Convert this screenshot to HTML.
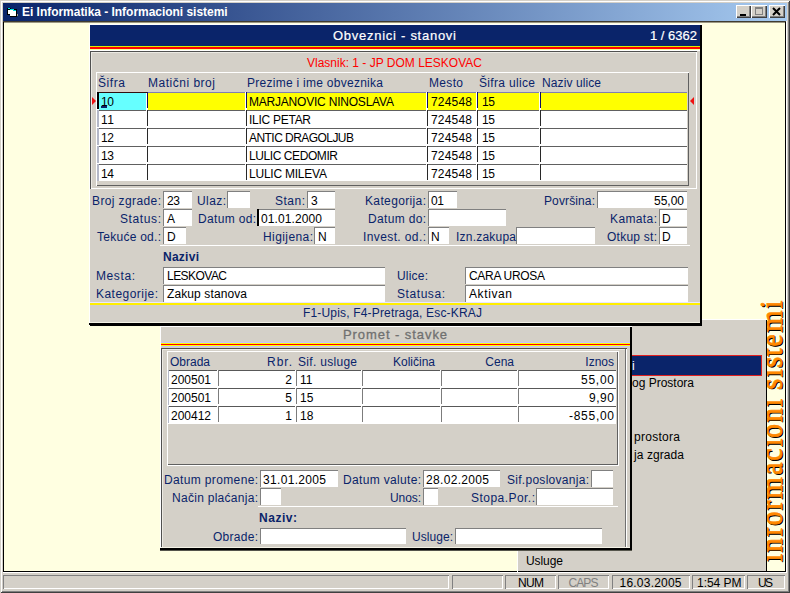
<!DOCTYPE html>
<html><head><meta charset="utf-8"><title>Ei Informatika</title>
<style>
html,body{margin:0;padding:0;}
body{width:790px;height:593px;overflow:hidden;position:relative;background:#d4d0c8;font-family:"Liberation Sans",sans-serif;}
#r{position:absolute;left:0;top:0;width:790px;height:593px;overflow:hidden;}
#r div,#r span,#r svg{position:absolute;}
#r span{white-space:pre;}
</style></head><body><div id="r">
<div style="left:0px;top:0px;width:790px;height:593px;background:#d4d0c8;box-shadow:inset 1px 1px 0 #d4d0c8, inset -1px -1px 0 #404040, inset 2px 2px 0 #fff, inset -2px -2px 0 #808080;"></div>
<div style="left:3px;top:3px;width:784px;height:18px;background:linear-gradient(90deg,#0a246a 0%,#a6caf0 100%);"></div>
<div style="left:3px;top:21px;width:784px;height:552px;background:#fff;"></div>
<div style="left:3px;top:21px;width:783px;height:551px;background:#ffffe1;box-shadow:inset 1px 1px 0 #000, inset -1px -1px 0 #000;"></div>
<div style="left:3px;top:21px;width:783px;height:1px;background:#403c30;"></div>
<div style="left:4px;top:22px;width:781px;height:1px;background:#9c9884;"></div>
<span style="top:5px;font-size:12px;line-height:14px;color:#fff;font-weight:bold;letter-spacing:-0.03px;left:22px;">Ei Informatika - Informacioni sistemi</span>
<div style="left:736px;top:5px;width:15px;height:13px;background:#d4d0c8;box-shadow:inset 1px 1px 0 #fff, inset -1px -1px 0 #404040, inset -2px -2px 0 #808080;"></div>
<div style="left:751px;top:5px;width:16px;height:13px;background:#d4d0c8;box-shadow:inset 1px 1px 0 #fff, inset -1px -1px 0 #404040, inset -2px -2px 0 #808080;"></div>
<div style="left:769px;top:5px;width:16px;height:13px;background:#d4d0c8;box-shadow:inset 1px 1px 0 #fff, inset -1px -1px 0 #404040, inset -2px -2px 0 #808080;"></div>
<div style="left:740px;top:14px;width:6px;height:2px;background:#000;"></div>
<div style="left:755px;top:7px;width:8px;height:8px;box-shadow:inset 0 2px 0 #808080, inset 1px 0 0 #808080, inset -1px -1px 0 #808080;background:#d4d0c8;"></div>
<svg style="left:772px;top:7px;width:10px;height:9px" viewBox="0 0 10 9"><path d="M1 1 L8 8 M8 1 L1 8" stroke="#000" stroke-width="2" fill="none"/></svg>
<svg style="left:0px;top:0px;width:24px;height:22px" viewBox="0 0 24 22" shape-rendering="crispEdges"><rect x="7" y="9" width="10" height="8" fill="#000"/><rect x="7" y="8" width="4" height="2" fill="#000"/><rect x="8" y="8" width="2" height="1" fill="#00e8e8"/><rect x="10" y="9" width="4" height="1" fill="#00e8e8"/><rect x="13" y="10" width="3" height="1" fill="#00d8d8"/><rect x="8" y="10" width="5" height="4" fill="#fff"/><rect x="10" y="11" width="6" height="5" fill="#fff"/><rect x="7" y="15" width="3" height="2" fill="#0a246a"/><rect x="17" y="14" width="1" height="2" fill="#a0a090"/></svg>
<div style="left:750px;top:290px;width:36px;height:281px;overflow:hidden;"><span style="left:0;top:0;transform-origin:0 0;transform:translate(5px,272px) rotate(-90deg) scaleX(0.993);font-family:'Liberation Serif',serif;font-size:32px;line-height:32px;color:#ff8800;-webkit-text-stroke:0.7px #ff8800;text-shadow:-1px 1px 0 #000,-1.4px 1.4px 0 #000;white-space:pre;"><i style="display:inline-block;position:static;font-style:normal;transform:scaleX(.87)">i</i><i style="display:inline-block;position:static;font-style:normal;transform:scaleX(.87)">n</i><i style="display:inline-block;position:static;font-style:normal;transform:scaleX(.87)">f</i><i style="display:inline-block;position:static;font-style:normal;transform:scaleX(.87)">o</i><i style="display:inline-block;position:static;font-style:normal;transform:scaleX(.87)">r</i><i style="display:inline-block;position:static;font-style:normal;transform:scaleX(.87)">m</i><i style="display:inline-block;position:static;font-style:normal;transform:scaleX(.87)">a</i><i style="display:inline-block;position:static;font-style:normal;transform:scaleX(.87)">c</i><i style="display:inline-block;position:static;font-style:normal;transform:scaleX(.87)">i</i><i style="display:inline-block;position:static;font-style:normal;transform:scaleX(.87)">o</i><i style="display:inline-block;position:static;font-style:normal;transform:scaleX(.87)">n</i><i style="display:inline-block;position:static;font-style:normal;transform:scaleX(.87)">i</i> <i style="display:inline-block;position:static;font-style:normal;transform:scaleX(.87)">s</i><i style="display:inline-block;position:static;font-style:normal;transform:scaleX(.87)">i</i><i style="display:inline-block;position:static;font-style:normal;transform:scaleX(.87)">s</i><i style="display:inline-block;position:static;font-style:normal;transform:scaleX(.87)">t</i><i style="display:inline-block;position:static;font-style:normal;transform:scaleX(.87)">e</i><i style="display:inline-block;position:static;font-style:normal;transform:scaleX(.87)">m</i><i style="display:inline-block;position:static;font-style:normal;transform:scaleX(.87)">i</i></span></div>

<div style="left:517px;top:319px;width:250px;height:253px;background:#d4d0c8;box-shadow:inset 1px 1px 0 #fff, inset -1px -1px 0 #000;"></div>
<div style="left:625px;top:355px;width:137px;height:21px;background:#0a246a;box-shadow:inset 0 0 0 1px #e02020;"></div>
<span style="top:359px;font-size:12px;line-height:14px;color:#fff;left:632px;">i</span>
<span style="top:376px;font-size:12px;line-height:14px;color:#000;left:632px;">og Prostora</span>
<span style="top:430px;font-size:12px;line-height:14px;color:#000;letter-spacing:0.28px;left:634px;">prostora</span>
<span style="top:448px;font-size:12px;line-height:14px;color:#000;letter-spacing:0.08px;left:634px;">ja zgrada</span>
<span style="top:554px;font-size:12px;line-height:14px;color:#000;letter-spacing:-0.07px;left:526px;">Usluge</span>
<div style="left:160px;top:325px;width:472px;height:226px;background:#d4d0c8;box-shadow:inset 1px 2px 0 #fff, inset -2px -2px 0 #000;"></div>
<div style="left:161px;top:547px;width:469px;height:1px;background:#f4f2e6;"></div>
<div style="left:160px;top:548px;width:471px;height:2px;background:#000;"></div>
<div style="left:160px;top:550px;width:472px;height:1px;background:#55554c;"></div>
<div style="left:161px;top:342px;width:469px;height:1px;background:#c4c4ff;"></div>
<div style="left:161px;top:343px;width:469px;height:1px;background:#ffff00;"></div>
<div style="left:161px;top:344px;width:469px;height:1px;background:#ff0000;"></div>
<div style="left:161px;top:345px;width:469px;height:1px;background:#ffff00;"></div>
<div style="left:161px;top:346px;width:469px;height:1px;background:#c4c4ff;"></div>
<div style="left:161px;top:348px;width:466px;height:199px;background:#d4d0c8;box-shadow:inset 1px 1px 0 #505050, inset -1px 0 0 #fff, inset -2px 0 0 #707070, inset 2px 2px 0 #eceae4;"></div>
<div style="left:167px;top:351px;width:451px;height:114px;background:#d4d0c8;box-shadow:inset 1px 1px 0 #fff, inset -1px -1px 0 #606060;"></div>
<div style="left:618px;top:351px;width:1px;height:115px;background:#fff;"></div>
<div style="left:167px;top:465px;width:452px;height:1px;background:#fff;"></div>
<div style="left:168px;top:370px;width:448px;height:54px;background:#fff;"></div>
<div style="left:168px;top:370px;width:448px;height:1px;background:#585858;"></div>
<div style="left:217px;top:370px;width:1px;height:1px;background:#fff;"></div>
<div style="left:218px;top:370px;width:1px;height:16px;background:#7c7c7c;"></div>
<div style="left:295px;top:370px;width:1px;height:1px;background:#fff;"></div>
<div style="left:296px;top:370px;width:1px;height:16px;background:#7c7c7c;"></div>
<div style="left:361px;top:370px;width:1px;height:1px;background:#fff;"></div>
<div style="left:362px;top:370px;width:1px;height:16px;background:#7c7c7c;"></div>
<div style="left:440px;top:370px;width:1px;height:1px;background:#fff;"></div>
<div style="left:441px;top:370px;width:1px;height:16px;background:#7c7c7c;"></div>
<div style="left:517px;top:370px;width:1px;height:1px;background:#fff;"></div>
<div style="left:518px;top:370px;width:1px;height:16px;background:#7c7c7c;"></div>
<div style="left:168px;top:370px;width:1px;height:17px;background:#b4b8c8;"></div>
<div style="left:168px;top:388px;width:448px;height:1px;background:#585858;"></div>
<div style="left:217px;top:388px;width:1px;height:1px;background:#fff;"></div>
<div style="left:218px;top:388px;width:1px;height:16px;background:#7c7c7c;"></div>
<div style="left:295px;top:388px;width:1px;height:1px;background:#fff;"></div>
<div style="left:296px;top:388px;width:1px;height:16px;background:#7c7c7c;"></div>
<div style="left:361px;top:388px;width:1px;height:1px;background:#fff;"></div>
<div style="left:362px;top:388px;width:1px;height:16px;background:#7c7c7c;"></div>
<div style="left:440px;top:388px;width:1px;height:1px;background:#fff;"></div>
<div style="left:441px;top:388px;width:1px;height:16px;background:#7c7c7c;"></div>
<div style="left:517px;top:388px;width:1px;height:1px;background:#fff;"></div>
<div style="left:518px;top:388px;width:1px;height:16px;background:#7c7c7c;"></div>
<div style="left:168px;top:388px;width:1px;height:17px;background:#b4b8c8;"></div>
<div style="left:168px;top:406px;width:448px;height:1px;background:#585858;"></div>
<div style="left:217px;top:406px;width:1px;height:1px;background:#fff;"></div>
<div style="left:218px;top:406px;width:1px;height:16px;background:#7c7c7c;"></div>
<div style="left:295px;top:406px;width:1px;height:1px;background:#fff;"></div>
<div style="left:296px;top:406px;width:1px;height:16px;background:#7c7c7c;"></div>
<div style="left:361px;top:406px;width:1px;height:1px;background:#fff;"></div>
<div style="left:362px;top:406px;width:1px;height:16px;background:#7c7c7c;"></div>
<div style="left:440px;top:406px;width:1px;height:1px;background:#fff;"></div>
<div style="left:441px;top:406px;width:1px;height:16px;background:#7c7c7c;"></div>
<div style="left:517px;top:406px;width:1px;height:1px;background:#fff;"></div>
<div style="left:518px;top:406px;width:1px;height:16px;background:#7c7c7c;"></div>
<div style="left:168px;top:406px;width:1px;height:17px;background:#b4b8c8;"></div>
<div style="left:260px;top:470px;width:78px;height:17px;background:#fff;box-shadow:inset 1px 1px 0 #808080;"></div>
<div style="left:423px;top:470px;width:77px;height:17px;background:#fff;box-shadow:inset 1px 1px 0 #808080;"></div>
<div style="left:591px;top:470px;width:22px;height:17px;background:#fff;box-shadow:inset 1px 1px 0 #808080;"></div>
<div style="left:260px;top:488px;width:21px;height:17px;background:#fff;box-shadow:inset 1px 1px 0 #808080;"></div>
<div style="left:423px;top:488px;width:15px;height:17px;background:#fff;box-shadow:inset 1px 1px 0 #808080;"></div>
<div style="left:536px;top:488px;width:77px;height:17px;background:#fff;box-shadow:inset 1px 1px 0 #808080;"></div>
<div style="left:258px;top:506px;width:360px;height:1px;background:#fff;"></div>
<div style="left:260px;top:528px;width:146px;height:16px;background:#fff;box-shadow:inset 1px 1px 0 #808080;"></div>
<div style="left:455px;top:528px;width:147px;height:16px;background:#fff;box-shadow:inset 1px 1px 0 #808080;"></div>
<span style="top:327px;font-size:13px;line-height:15px;color:#707070;letter-spacing:0.93px;left:343px;-webkit-text-stroke:0.3px #707070;">Promet - stavke</span>
<span style="top:373px;font-size:12px;line-height:14px;color:#000;letter-spacing:-0.01px;left:171px;">200501</span>
<span style="top:373px;font-size:12px;line-height:14px;color:#000;right:498px;">2</span>
<span style="top:373px;font-size:12px;line-height:14px;color:#000;left:300px;">11</span>
<span style="top:373px;font-size:12px;line-height:14px;color:#000;letter-spacing:0.74px;left:581px;">55,00</span>
<span style="top:391px;font-size:12px;line-height:14px;color:#000;letter-spacing:-0.01px;left:171px;">200501</span>
<span style="top:391px;font-size:12px;line-height:14px;color:#000;right:498px;">5</span>
<span style="top:391px;font-size:12px;line-height:14px;color:#000;left:300px;">15</span>
<span style="top:391px;font-size:12px;line-height:14px;color:#000;letter-spacing:0.55px;left:589px;">9,90</span>
<span style="top:409px;font-size:12px;line-height:14px;color:#000;letter-spacing:-0.01px;left:171px;">200412</span>
<span style="top:409px;font-size:12px;line-height:14px;color:#000;right:498px;">1</span>
<span style="top:409px;font-size:12px;line-height:14px;color:#000;left:300px;">18</span>
<span style="top:409px;font-size:12px;line-height:14px;color:#000;letter-spacing:0.72px;left:569px;">-855,00</span>
<span style="top:355px;font-size:12px;line-height:14px;color:#0a246a;letter-spacing:-0.01px;left:170px;">Obrada</span>
<span style="top:355px;font-size:12px;line-height:14px;color:#0a246a;letter-spacing:0.99px;left:267px;">Rbr.</span>
<span style="top:355px;font-size:12px;line-height:14px;color:#0a246a;letter-spacing:0.3px;left:298px;">Sif. usluge</span>
<span style="top:355px;font-size:12px;line-height:14px;color:#0a246a;left:393px;">Količina</span>
<span style="top:355px;font-size:12px;line-height:14px;color:#0a246a;right:276px;">Cena</span>
<span style="top:355px;font-size:12px;line-height:14px;color:#0a246a;right:176px;">Iznos</span>
<span style="top:473px;font-size:12px;line-height:14px;color:#0a246a;letter-spacing:0.36px;left:164px;">Datum promene:</span>
<span style="top:473px;font-size:12px;line-height:14px;color:#000;letter-spacing:0.33px;left:263px;">31.01.2005</span>
<span style="top:473px;font-size:12px;line-height:14px;color:#0a246a;letter-spacing:0.33px;left:343px;">Datum valute:</span>
<span style="top:473px;font-size:12px;line-height:14px;color:#000;letter-spacing:0.33px;left:426px;">28.02.2005</span>
<span style="top:473px;font-size:12px;line-height:14px;color:#0a246a;letter-spacing:0.28px;left:507px;">Sif.poslovanja:</span>
<span style="top:491px;font-size:12px;line-height:14px;color:#0a246a;letter-spacing:0.28px;left:172px;">Način plaćanja:</span>
<span style="top:491px;font-size:12px;line-height:14px;color:#0a246a;letter-spacing:-0.09px;left:390px;">Unos:</span>
<span style="top:491px;font-size:12px;line-height:14px;color:#0a246a;letter-spacing:0.46px;left:471px;">Stopa.Por.:</span>
<span style="top:511px;font-size:12px;line-height:14px;color:#0a246a;font-weight:bold;letter-spacing:0.53px;left:259px;">Naziv:</span>
<span style="top:530px;font-size:12px;line-height:14px;color:#0a246a;letter-spacing:0.27px;left:213px;">Obrade:</span>
<span style="top:530px;font-size:12px;line-height:14px;color:#0a246a;letter-spacing:0.05px;left:412px;">Usluge:</span>
<div style="left:89px;top:24px;width:613px;height:302px;background:#d4d0c8;box-shadow:inset 1px 1px 0 #fff, inset -2px -2px 0 #000;"></div>
<div style="left:90px;top:322px;width:610px;height:1px;background:#f4f2e6;"></div>
<div style="left:89px;top:323px;width:612px;height:2px;background:#000;"></div>
<div style="left:90px;top:25px;width:610px;height:21px;background:#0a246a;"></div>
<div style="left:90px;top:46px;width:610px;height:1px;background:#d8ee00;"></div>
<div style="left:90px;top:47px;width:610px;height:2px;background:#ff0000;"></div>
<div style="left:90px;top:49px;width:610px;height:1px;background:#f4ff90;"></div>
<div style="left:90px;top:50px;width:610px;height:1px;background:#fff;"></div>
<div style="left:90px;top:51px;width:607px;height:138px;background:#d4d0c8;box-shadow:inset 1px 1px 0 #505050, inset -1px -1px 0 #fff, inset 2px 2px 0 #eceae4;"></div>
<div style="left:96px;top:72px;width:593px;height:114px;background:#d4d0c8;box-shadow:inset 1px 1px 0 #fff, inset -1px -1px 0 #606060;"></div>
<div style="left:97px;top:92px;width:590px;height:89px;background:#fff;"></div>
<div style="left:99px;top:93px;width:47px;height:17px;background:#66ffff;"></div>
<div style="left:148px;top:93px;width:97px;height:17px;background:#ffff00;"></div>
<div style="left:247px;top:93px;width:179px;height:17px;background:#ffff00;"></div>
<div style="left:428px;top:93px;width:48px;height:17px;background:#ffff00;"></div>
<div style="left:478px;top:93px;width:61px;height:17px;background:#ffff00;"></div>
<div style="left:541px;top:93px;width:146px;height:17px;background:#ffff00;"></div>
<div style="left:97px;top:92px;width:590px;height:1px;background:#8080b0;"></div>
<div style="left:146px;top:92px;width:1px;height:1px;background:#fff;"></div>
<div style="left:147px;top:92px;width:1px;height:16px;background:#101060;"></div>
<div style="left:245px;top:92px;width:1px;height:1px;background:#fff;"></div>
<div style="left:246px;top:92px;width:1px;height:16px;background:#101060;"></div>
<div style="left:426px;top:92px;width:1px;height:1px;background:#fff;"></div>
<div style="left:427px;top:92px;width:1px;height:16px;background:#101060;"></div>
<div style="left:476px;top:92px;width:1px;height:1px;background:#fff;"></div>
<div style="left:477px;top:92px;width:1px;height:16px;background:#101060;"></div>
<div style="left:539px;top:92px;width:1px;height:1px;background:#fff;"></div>
<div style="left:540px;top:92px;width:1px;height:16px;background:#101060;"></div>
<div style="left:97px;top:92px;width:2px;height:17px;background:#b4b8c8;"></div>
<div style="left:97px;top:110px;width:590px;height:1px;background:#606060;"></div>
<div style="left:146px;top:110px;width:1px;height:1px;background:#fff;"></div>
<div style="left:147px;top:110px;width:1px;height:16px;background:#282828;"></div>
<div style="left:245px;top:110px;width:1px;height:1px;background:#fff;"></div>
<div style="left:246px;top:110px;width:1px;height:16px;background:#282828;"></div>
<div style="left:426px;top:110px;width:1px;height:1px;background:#fff;"></div>
<div style="left:427px;top:110px;width:1px;height:16px;background:#282828;"></div>
<div style="left:476px;top:110px;width:1px;height:1px;background:#fff;"></div>
<div style="left:477px;top:110px;width:1px;height:16px;background:#282828;"></div>
<div style="left:539px;top:110px;width:1px;height:1px;background:#fff;"></div>
<div style="left:540px;top:110px;width:1px;height:16px;background:#282828;"></div>
<div style="left:97px;top:110px;width:2px;height:17px;background:#b4b8c8;"></div>
<div style="left:97px;top:128px;width:590px;height:1px;background:#606060;"></div>
<div style="left:146px;top:128px;width:1px;height:1px;background:#fff;"></div>
<div style="left:147px;top:128px;width:1px;height:16px;background:#282828;"></div>
<div style="left:245px;top:128px;width:1px;height:1px;background:#fff;"></div>
<div style="left:246px;top:128px;width:1px;height:16px;background:#282828;"></div>
<div style="left:426px;top:128px;width:1px;height:1px;background:#fff;"></div>
<div style="left:427px;top:128px;width:1px;height:16px;background:#282828;"></div>
<div style="left:476px;top:128px;width:1px;height:1px;background:#fff;"></div>
<div style="left:477px;top:128px;width:1px;height:16px;background:#282828;"></div>
<div style="left:539px;top:128px;width:1px;height:1px;background:#fff;"></div>
<div style="left:540px;top:128px;width:1px;height:16px;background:#282828;"></div>
<div style="left:97px;top:128px;width:2px;height:17px;background:#b4b8c8;"></div>
<div style="left:97px;top:146px;width:590px;height:1px;background:#606060;"></div>
<div style="left:146px;top:146px;width:1px;height:1px;background:#fff;"></div>
<div style="left:147px;top:146px;width:1px;height:16px;background:#282828;"></div>
<div style="left:245px;top:146px;width:1px;height:1px;background:#fff;"></div>
<div style="left:246px;top:146px;width:1px;height:16px;background:#282828;"></div>
<div style="left:426px;top:146px;width:1px;height:1px;background:#fff;"></div>
<div style="left:427px;top:146px;width:1px;height:16px;background:#282828;"></div>
<div style="left:476px;top:146px;width:1px;height:1px;background:#fff;"></div>
<div style="left:477px;top:146px;width:1px;height:16px;background:#282828;"></div>
<div style="left:539px;top:146px;width:1px;height:1px;background:#fff;"></div>
<div style="left:540px;top:146px;width:1px;height:16px;background:#282828;"></div>
<div style="left:97px;top:146px;width:2px;height:17px;background:#b4b8c8;"></div>
<div style="left:97px;top:164px;width:590px;height:1px;background:#606060;"></div>
<div style="left:146px;top:164px;width:1px;height:1px;background:#fff;"></div>
<div style="left:147px;top:164px;width:1px;height:16px;background:#282828;"></div>
<div style="left:245px;top:164px;width:1px;height:1px;background:#fff;"></div>
<div style="left:246px;top:164px;width:1px;height:16px;background:#282828;"></div>
<div style="left:426px;top:164px;width:1px;height:1px;background:#fff;"></div>
<div style="left:427px;top:164px;width:1px;height:16px;background:#282828;"></div>
<div style="left:476px;top:164px;width:1px;height:1px;background:#fff;"></div>
<div style="left:477px;top:164px;width:1px;height:16px;background:#282828;"></div>
<div style="left:539px;top:164px;width:1px;height:1px;background:#fff;"></div>
<div style="left:540px;top:164px;width:1px;height:16px;background:#282828;"></div>
<div style="left:97px;top:164px;width:2px;height:17px;background:#b4b8c8;"></div>
<div style="left:97px;top:92px;width:50px;height:1px;background:#301010;"></div>
<div style="left:97px;top:92px;width:2px;height:17px;background:#000;"></div>
<div style="left:101px;top:106px;width:6px;height:2px;background:#0a246a;"></div>
<span style="top:28px;font-size:13px;line-height:15px;color:#fff;letter-spacing:0.73px;left:333px;-webkit-text-stroke:0.2px #fff;">Obveznici - stanovi</span>
<span style="top:28px;font-size:13px;line-height:15px;color:#fff;left:650px;-webkit-text-stroke:0.2px #fff;">1 / 6362</span>
<span style="top:56px;font-size:12px;line-height:14px;color:#ff0000;left:307px;">Vlasnik: 1 - JP DOM LESKOVAC</span>
<span style="top:95px;font-size:12px;line-height:14px;color:#000;letter-spacing:-0.36px;left:101px;">10</span>
<span style="top:95px;font-size:12px;line-height:14px;color:#000;letter-spacing:-0.21px;left:249px;">MARJANOVIC NINOSLAVA</span>
<span style="top:95px;font-size:12px;line-height:14px;color:#000;letter-spacing:0.19px;left:431px;">724548</span>
<span style="top:95px;font-size:12px;line-height:14px;color:#000;letter-spacing:-0.36px;left:482px;">15</span>
<span style="top:113px;font-size:12px;line-height:14px;color:#000;letter-spacing:0.53px;left:101px;">11</span>
<span style="top:113px;font-size:12px;line-height:14px;color:#000;letter-spacing:-0.27px;left:249px;">ILIC PETAR</span>
<span style="top:113px;font-size:12px;line-height:14px;color:#000;letter-spacing:0.19px;left:431px;">724548</span>
<span style="top:113px;font-size:12px;line-height:14px;color:#000;letter-spacing:-0.36px;left:482px;">15</span>
<span style="top:131px;font-size:12px;line-height:14px;color:#000;letter-spacing:-0.36px;left:101px;">12</span>
<span style="top:131px;font-size:12px;line-height:14px;color:#000;letter-spacing:-0.55px;left:249px;">ANTIC DRAGOLJUB</span>
<span style="top:131px;font-size:12px;line-height:14px;color:#000;letter-spacing:0.19px;left:431px;">724548</span>
<span style="top:131px;font-size:12px;line-height:14px;color:#000;letter-spacing:-0.36px;left:482px;">15</span>
<span style="top:149px;font-size:12px;line-height:14px;color:#000;letter-spacing:-0.36px;left:101px;">13</span>
<span style="top:149px;font-size:12px;line-height:14px;color:#000;letter-spacing:-0.42px;left:249px;">LULIC CEDOMIR</span>
<span style="top:149px;font-size:12px;line-height:14px;color:#000;letter-spacing:0.19px;left:431px;">724548</span>
<span style="top:149px;font-size:12px;line-height:14px;color:#000;letter-spacing:-0.36px;left:482px;">15</span>
<span style="top:167px;font-size:12px;line-height:14px;color:#000;letter-spacing:-0.36px;left:101px;">14</span>
<span style="top:167px;font-size:12px;line-height:14px;color:#000;letter-spacing:-0.23px;left:249px;">LULIC MILEVA</span>
<span style="top:167px;font-size:12px;line-height:14px;color:#000;letter-spacing:0.19px;left:431px;">724548</span>
<span style="top:167px;font-size:12px;line-height:14px;color:#000;letter-spacing:-0.36px;left:482px;">15</span>
<span style="top:76px;font-size:12px;line-height:14px;color:#0a246a;letter-spacing:0.58px;left:98px;">Šifra</span>
<span style="top:76px;font-size:12px;line-height:14px;color:#0a246a;letter-spacing:0.51px;left:148px;">Matični broj</span>
<span style="top:76px;font-size:12px;line-height:14px;color:#0a246a;letter-spacing:0.27px;left:247px;">Prezime i ime obveznika</span>
<span style="top:76px;font-size:12px;line-height:14px;color:#0a246a;letter-spacing:0.33px;left:429px;">Mesto</span>
<span style="top:76px;font-size:12px;line-height:14px;color:#0a246a;letter-spacing:0.33px;left:479px;">Šifra ulice</span>
<span style="top:76px;font-size:12px;line-height:14px;color:#0a246a;letter-spacing:0.1px;left:542px;">Naziv ulice</span>
<svg style="left:92px;top:97px;width:4px;height:8px" viewBox="0 0 4 8"><path d="M0 0 L4 4 L0 8 Z" fill="#f01010"/></svg>
<svg style="left:690px;top:97px;width:4px;height:8px" viewBox="0 0 4 8"><path d="M4 0 L0 4 L4 8 Z" fill="#f01010"/></svg>
<div style="left:163px;top:191px;width:29px;height:17px;background:#fff;box-shadow:inset 1px 1px 0 #808080;"></div>
<div style="left:227px;top:191px;width:23px;height:17px;background:#fff;box-shadow:inset 1px 1px 0 #808080;"></div>
<div style="left:307px;top:191px;width:28px;height:17px;background:#fff;box-shadow:inset 1px 1px 0 #808080;"></div>
<div style="left:428px;top:191px;width:29px;height:17px;background:#fff;box-shadow:inset 1px 1px 0 #808080;"></div>
<div style="left:597px;top:191px;width:90px;height:17px;background:#fff;box-shadow:inset 1px 1px 0 #808080;"></div>
<div style="left:163px;top:209px;width:29px;height:17px;background:#fff;box-shadow:inset 1px 1px 0 #808080;"></div>
<div style="left:257px;top:209px;width:78px;height:17px;background:#fff;box-shadow:inset 1px 1px 0 #808080;"></div>
<div style="left:257px;top:209px;width:2px;height:17px;background:#000;"></div>
<div style="left:428px;top:209px;width:78px;height:17px;background:#fff;box-shadow:inset 1px 1px 0 #808080;"></div>
<div style="left:659px;top:209px;width:28px;height:17px;background:#fff;box-shadow:inset 1px 1px 0 #808080;"></div>
<div style="left:163px;top:227px;width:23px;height:17px;background:#fff;box-shadow:inset 1px 1px 0 #808080;"></div>
<div style="left:314px;top:227px;width:21px;height:17px;background:#fff;box-shadow:inset 1px 1px 0 #808080;"></div>
<div style="left:428px;top:227px;width:21px;height:17px;background:#fff;box-shadow:inset 1px 1px 0 #808080;"></div>
<div style="left:516px;top:227px;width:79px;height:17px;background:#fff;box-shadow:inset 1px 1px 0 #808080;"></div>
<div style="left:659px;top:227px;width:28px;height:17px;background:#fff;box-shadow:inset 1px 1px 0 #808080;"></div>
<div style="left:160px;top:245px;width:530px;height:1px;background:#fff;"></div>
<div style="left:163px;top:267px;width:222px;height:17px;background:#fff;box-shadow:inset 1px 1px 0 #808080;"></div>
<div style="left:465px;top:267px;width:223px;height:17px;background:#fff;box-shadow:inset 1px 1px 0 #808080;"></div>
<div style="left:163px;top:285px;width:222px;height:17px;background:#fff;box-shadow:inset 1px 1px 0 #808080;"></div>
<div style="left:465px;top:285px;width:223px;height:17px;background:#fff;box-shadow:inset 1px 1px 0 #808080;"></div>
<div style="left:90px;top:302px;width:610px;height:1px;background:#e8e8ff;"></div>
<div style="left:90px;top:303px;width:610px;height:2px;background:#ffee00;"></div>
<span style="top:194px;font-size:12px;line-height:14px;color:#0a246a;letter-spacing:0.39px;left:92px;">Broj zgrade:</span>
<span style="top:194px;font-size:12px;line-height:14px;color:#000;letter-spacing:-0.36px;left:167px;">23</span>
<span style="top:194px;font-size:12px;line-height:14px;color:#0a246a;letter-spacing:0.41px;left:197px;">Ulaz:</span>
<span style="top:194px;font-size:12px;line-height:14px;color:#0a246a;letter-spacing:0.49px;left:275px;">Stan:</span>
<span style="top:194px;font-size:12px;line-height:14px;color:#000;left:311px;">3</span>
<span style="top:194px;font-size:12px;line-height:14px;color:#0a246a;letter-spacing:0.36px;left:365px;">Kategorija:</span>
<span style="top:194px;font-size:12px;line-height:14px;color:#000;letter-spacing:-0.36px;left:431px;">01</span>
<span style="top:194px;font-size:12px;line-height:14px;color:#0a246a;letter-spacing:0.12px;left:544px;">Površina:</span>
<span style="top:194px;font-size:12px;line-height:14px;color:#000;right:106px;">55,00</span>
<span style="top:212px;font-size:12px;line-height:14px;color:#0a246a;letter-spacing:0.61px;left:120px;">Status:</span>
<span style="top:212px;font-size:12px;line-height:14px;color:#000;left:167px;">A</span>
<span style="top:212px;font-size:12px;line-height:14px;color:#0a246a;letter-spacing:0.33px;left:198px;">Datum od:</span>
<span style="top:212px;font-size:12px;line-height:14px;color:#000;letter-spacing:0.1px;left:261px;">01.01.2000</span>
<span style="top:212px;font-size:12px;line-height:14px;color:#0a246a;letter-spacing:0.33px;left:368px;">Datum do:</span>
<span style="top:212px;font-size:12px;line-height:14px;color:#0a246a;letter-spacing:0.38px;left:610px;">Kamata:</span>
<span style="top:212px;font-size:12px;line-height:14px;color:#000;left:662px;">D</span>
<span style="top:230px;font-size:12px;line-height:14px;color:#0a246a;letter-spacing:0.26px;left:97px;">Tekuće od.:</span>
<span style="top:230px;font-size:12px;line-height:14px;color:#000;left:167px;">D</span>
<span style="top:230px;font-size:12px;line-height:14px;color:#0a246a;letter-spacing:0.41px;left:263px;">Higijena:</span>
<span style="top:230px;font-size:12px;line-height:14px;color:#000;left:318px;">N</span>
<span style="top:230px;font-size:12px;line-height:14px;color:#0a246a;letter-spacing:0.39px;left:363px;">Invest. od.:</span>
<span style="top:230px;font-size:12px;line-height:14px;color:#000;left:431px;">N</span>
<span style="top:230px;font-size:12px;line-height:14px;color:#0a246a;letter-spacing:0.22px;left:456px;">Izn.zakupa</span>
<span style="top:230px;font-size:12px;line-height:14px;color:#0a246a;letter-spacing:0.25px;left:607px;">Otkup st:</span>
<span style="top:230px;font-size:12px;line-height:14px;color:#000;left:662px;">D</span>
<span style="top:250px;font-size:12px;line-height:14px;color:#0a246a;font-weight:bold;letter-spacing:0.26px;left:163px;">Nazivi</span>
<span style="top:269px;font-size:12px;line-height:14px;color:#0a246a;letter-spacing:0.6px;left:96px;">Mesta:</span>
<span style="top:269px;font-size:12px;line-height:14px;color:#000;letter-spacing:-0.54px;left:167px;">LESKOVAC</span>
<span style="top:269px;font-size:12px;line-height:14px;color:#0a246a;letter-spacing:0.2px;left:397px;">Ulice:</span>
<span style="top:269px;font-size:12px;line-height:14px;color:#000;letter-spacing:-0.3px;left:469px;">CARA UROSA</span>
<span style="top:287px;font-size:12px;line-height:14px;color:#0a246a;letter-spacing:0.46px;left:96px;">Kategorije:</span>
<span style="top:287px;font-size:12px;line-height:14px;color:#000;letter-spacing:0.11px;left:167px;">Zakup stanova</span>
<span style="top:287px;font-size:12px;line-height:14px;color:#0a246a;letter-spacing:0.57px;left:397px;">Statusa:</span>
<span style="top:287px;font-size:12px;line-height:14px;color:#000;letter-spacing:0.61px;left:469px;">Aktivan</span>
<span style="top:306px;font-size:12px;line-height:14px;color:#0a246a;letter-spacing:0.17px;left:303px;">F1-Upis, F4-Pretraga, Esc-KRAJ</span>
<div style="left:3px;top:575px;width:446px;height:14px;background:#d4d0c8;box-shadow:inset 1px 1px 0 #808080, inset -1px -1px 0 #fff;"></div>
<div style="left:452px;top:575px;width:51px;height:14px;background:#d4d0c8;box-shadow:inset 1px 1px 0 #808080, inset -1px -1px 0 #fff;"></div>
<div style="left:505px;top:575px;width:51px;height:14px;background:#d4d0c8;box-shadow:inset 1px 1px 0 #808080, inset -1px -1px 0 #fff;"></div>
<div style="left:558px;top:575px;width:51px;height:14px;background:#d4d0c8;box-shadow:inset 1px 1px 0 #808080, inset -1px -1px 0 #fff;"></div>
<div style="left:612px;top:575px;width:78px;height:14px;background:#d4d0c8;box-shadow:inset 1px 1px 0 #808080, inset -1px -1px 0 #fff;"></div>
<div style="left:692px;top:575px;width:53px;height:14px;background:#d4d0c8;box-shadow:inset 1px 1px 0 #808080, inset -1px -1px 0 #fff;"></div>
<div style="left:747px;top:575px;width:38px;height:14px;background:#d4d0c8;box-shadow:inset 1px 1px 0 #808080, inset -1px -1px 0 #fff;"></div>
<span style="top:576px;font-size:12px;line-height:14px;color:#000;letter-spacing:-0.66px;left:518px;">NUM</span>
<span style="top:576px;font-size:12px;line-height:14px;color:#808080;letter-spacing:-0.9px;left:568.5px;">CAPS</span>
<span style="top:576px;font-size:12px;line-height:14px;color:#000;letter-spacing:0.22px;left:619.5px;">16.03.2005</span>
<span style="top:576px;font-size:12px;line-height:14px;color:#000;letter-spacing:-0.03px;left:697px;">1:54 PM</span>
<span style="top:576px;font-size:12px;line-height:14px;color:#000;letter-spacing:-1.67px;left:758px;">US</span>
</div></body></html>
